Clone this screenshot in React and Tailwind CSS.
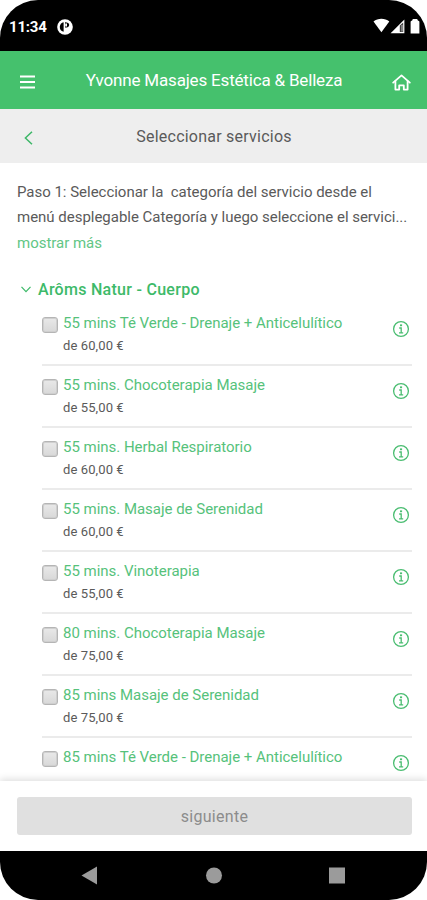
import React, { useState } from 'react';

const services = [
  { id: 1, name: '55 mins Té Verde - Drenaje + Anticelulítico', price: '60,00 €' },
  { id: 2, name: '55 mins. Chocoterapia Masaje', price: '55,00 €' },
  { id: 3, name: '55 mins. Herbal Respiratorio', price: '60,00 €' },
  { id: 4, name: '55 mins. Masaje de Serenidad', price: '60,00 €' },
  { id: 5, name: '55 mins. Vinoterapia', price: '55,00 €' },
  { id: 6, name: '80 mins. Chocoterapia Masaje', price: '75,00 €' },
  { id: 7, name: '85 mins Masaje de Serenidad', price: '75,00 €' },
  { id: 8, name: '85 mins Té Verde - Drenaje + Anticelulítico' },
];

const StatusBar = () => (
  <div className="h-[51px] shrink-0 bg-black text-white flex items-start justify-between pl-[9px] pr-[6px] pt-[17px]">
    <div className="flex items-center gap-[10px] h-[19px]">
      <span className="text-[15px] leading-[18px] font-bold tracking-[-0.2px]">11:34</span>
      <svg className="w-[16px] h-[16px]" viewBox="0 0 16 16">
        <circle cx="8" cy="8" r="7.8" fill="#fff" />
        <path d="M6.6 12.8C3.9 12.1 2.7 10.2 2.8 7.8 2.9 5.4 4.4 3.7 6.6 3.2Z" fill="#000" />
        <path d="M8 3.2c2.6.1 4.2 1 4.2 2.7S10.600 8.500 8 8.500Z" fill="#000" />
        <path d="M8.200 4.400h1.800v3H8.200z" fill="#fff" />
      </svg>
    </div>
    <svg className="w-[48px] h-[18px]" viewBox="0 0 48 18">
      <path d="M0.5 4.6C4.800 0.8 12 0.8 16.300 4.600L8.400 15.200Z" fill="#fff" />
      <path d="M31.400 2.400V16.200H17.600Z" fill="#fff" />
      <path d="M26.800 8.500 30.200 5.500V15H26.800z" fill="#444" />
      <path d="M28.500 8h1v6.500h-1z" fill="#bbb" />
      <path d="M37.600 4.400 39.600 3V2h4.800v1l2 1.400v12H37.600z" fill="#fff" />
    </svg>
  </div>
);

const InfoIcon = () => (
  <svg className="w-[18px] h-[18px]" viewBox="0 0 18 18" fill="none" stroke="#4abd71" strokeWidth="1.3">
    <circle cx="9" cy="9" r="7.4" />
    <path d="M7.2 8h2v4.6M7 12.8h4.2" />
    <path d="M8 5.3h2.1" strokeWidth="1.8" />
  </svg>
);

const ServiceRow = ({ service, checked, onToggle }) => (
  <div className="h-[62px] shrink-0 flex items-start border-b-2 border-[#ebebeb]">
    <button
      role="checkbox"
      aria-checked={checked}
      onClick={onToggle}
      className="mt-[13px] w-[16px] h-[16px] shrink-0 rounded-[3px] border border-[#b5b5b5] bg-linear-to-b from-[#e9e9e9] to-[#d8d8d8] shadow-[inset_0_0_0_1px_#cfcfcf]"
    />
    <div className="ml-[5px] grow">
      <div className="mt-[8px] text-[15px] leading-[22px] tracking-[-0.02px] text-[#56c27b] whitespace-nowrap">{service.name}</div>
      {service.price && (
        <div className="text-[13px] leading-[23px] tracking-[0.1px] text-[#5a5a5a]">de {service.price}</div>
      )}
    </div>
    <button className="mt-[16px] mr-[2px]">
      <InfoIcon />
    </button>
  </div>
);

const App = () => {
  const [selected, setSelected] = useState([]);

  const toggle = (id) => {
    setSelected(selected.includes(id) ? selected.filter((s) => s !== id) : [...selected, id]);
  };

  return (
    <div className="bg-white">
      <div className="w-[427px] h-[900px] rounded-[38px] overflow-hidden flex flex-col bg-white font-[Roboto,sans-serif]">
        <StatusBar />
        <header className="h-[58px] shrink-0 bg-[#45c16d] text-white flex items-center justify-between pl-[20px] pr-[16px]">
          <svg className="w-[15px] h-[14px] mt-[3px]" viewBox="0 0 15 14" stroke="#fff" strokeWidth="2.2">
            <path d="M0 1.5h15M0 7h15M0 12.5h15" />
          </svg>
          <h1 className="pl-px text-[17px] leading-[24px] tracking-[-0.18px] whitespace-nowrap">Yvonne Masajes Estética &amp; Belleza</h1>
          <svg className="w-[19px] h-[17px] mt-[4px]" viewBox="0 0 19 17" fill="none" stroke="#fff" strokeWidth="1.8" strokeLinejoin="round" strokeLinecap="round">
            <path d="M1.2 8.6 9.5 1.4 17.8 8.6" />
            <path d="M3.4 7.2V15.6H7.2V11.4H11.8V15.6H15.6V7.2" />
          </svg>
        </header>
        <div className="h-[54px] shrink-0 bg-[#eeeeee] flex items-center pl-[24px]">
          <svg className="w-[9px] h-[14px] mt-[4px]" viewBox="0 0 9 14" fill="none" stroke="#3db768" strokeWidth="1.5">
            <path d="M8 0.7 1.4 7 8 13.3" />
          </svg>
          <h2 className="mt-[2px] grow pr-[32px] text-center text-[16px] leading-[24px] tracking-[0.23px] text-[#5a5a5a]">Seleccionar servicios</h2>
        </div>
        <main className="h-[618px] shrink-0 overflow-hidden pl-[17px] pr-[15px] flex flex-col">
          <div className="mt-[17px] text-[15px] leading-[25px] tracking-[-0.02px] text-[#5a5a5a] whitespace-pre">
            <p>Paso 1: Seleccionar la  categoría del servicio desde el</p>
            <p>menú desplegable Categoría y luego seleccione el servici...</p>
            <p className="mt-px text-[#62c685]">mostrar más</p>
          </div>
          <div className="mt-[21px] mb-px h-[24px] pl-[4px] flex items-center gap-[7px] text-[#3dba69]">
            <svg className="w-[10px] h-[7px]" viewBox="0 0 10 7" fill="none" stroke="currentColor" strokeWidth="1.2">
              <path d="M0.5 0.8 5 5.6 9.5 0.8" />
            </svg>
            <span className="mt-px text-[16px] leading-[24px] font-medium tracking-[0.28px]">Arôms Natur - Cuerpo</span>
          </div>
          <div className="pl-[25px] mt-[2px] flex flex-col">
            {services.map((s) => (
              <ServiceRow key={s.id} service={s} checked={selected.includes(s.id)} onToggle={() => toggle(s.id)} />
            ))}
          </div>
        </main>
        <footer className="relative h-[70px] shrink-0 bg-white px-[17px] pt-[16px] shadow-[0_-2px_7px_rgba(0,0,0,0.13)]">
          <button className="w-[395px] h-[38px] rounded-[3px] bg-[#e0e0e0] text-[16px] leading-[39px] tracking-[0.3px] text-[#8c8c8c]">siguiente</button>
        </footer>
        <nav className="h-[49px] shrink-0 bg-black">
          <svg className="w-[427px] h-[49px]" viewBox="0 0 427 49" fill="#9b9b9b">
            <path d="M81.5 24.5 97 15.5V33.5Z" />
            <circle cx="214" cy="24.5" r="8" />
            <path d="M329 16.5h16v16h-16z" />
          </svg>
        </nav>
      </div>
    </div>
  );
};

export default App;
